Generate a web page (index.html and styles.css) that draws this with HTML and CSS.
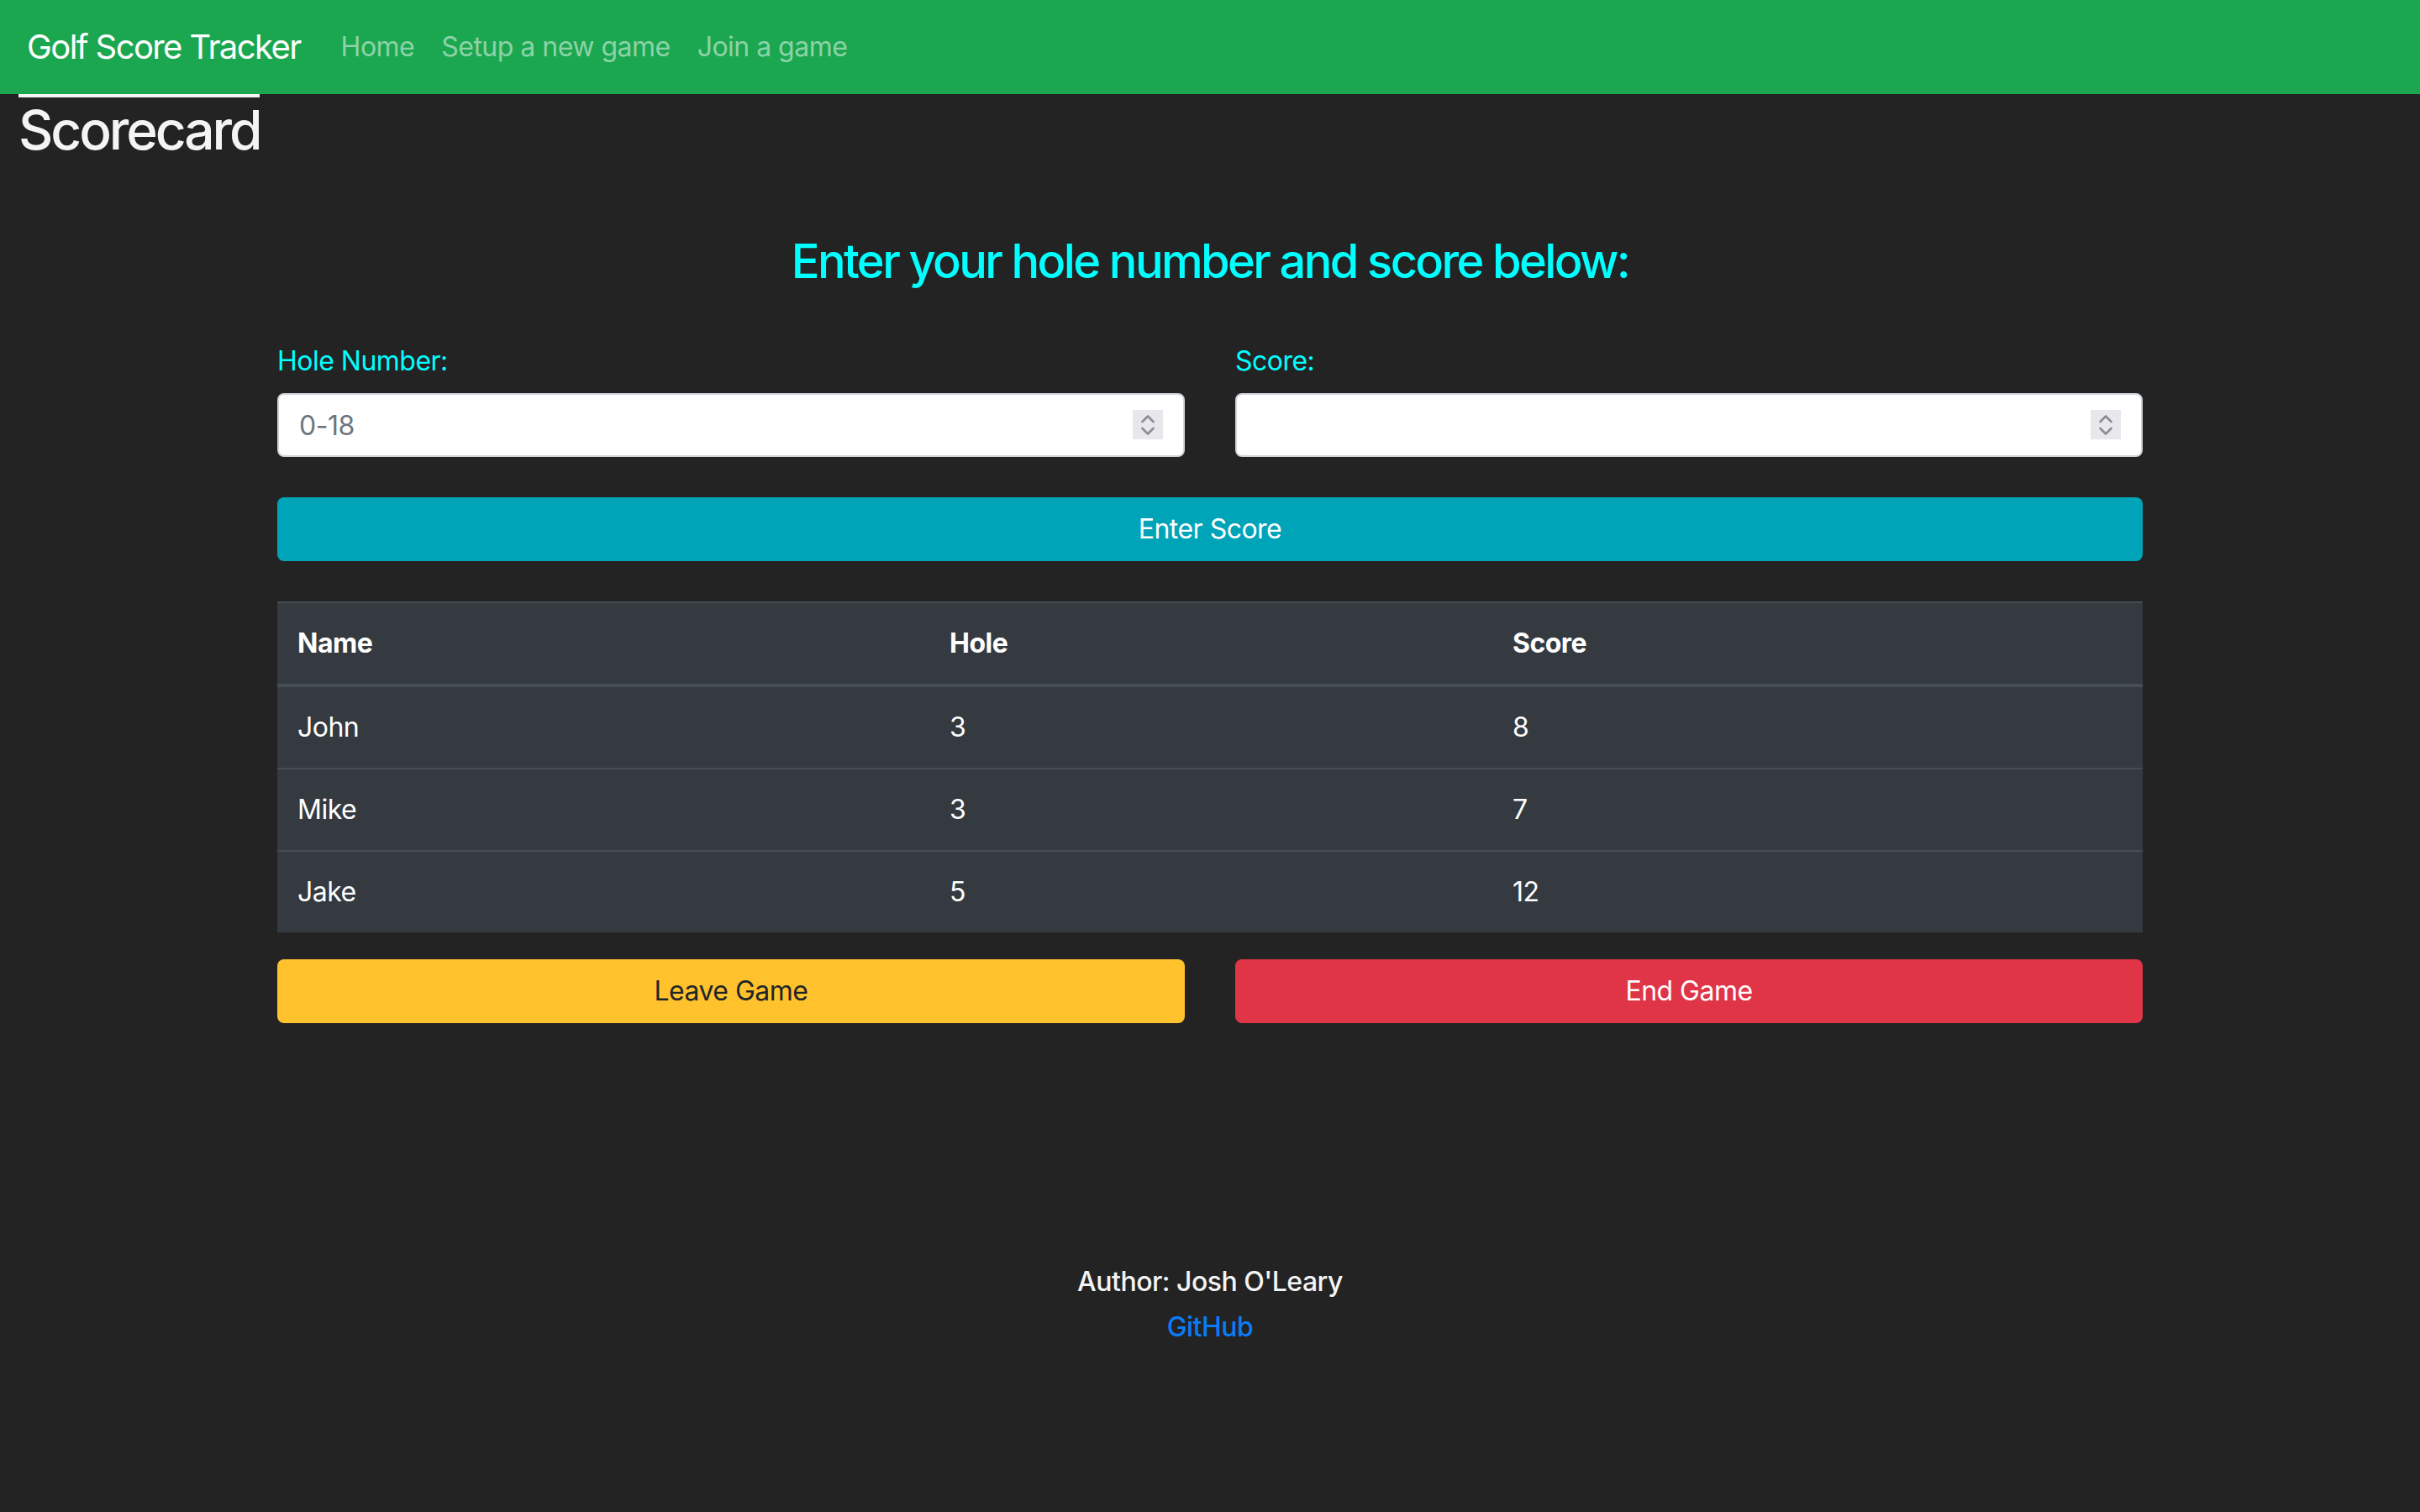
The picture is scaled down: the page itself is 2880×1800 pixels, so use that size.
FILE: index.html
```html
<!DOCTYPE html>
<html lang="en">
<head>
<meta charset="utf-8">
<title>Golf Score Tracker</title>
<link rel="stylesheet" href="styles.css">
</head>
<body>
<nav class="navbar">
  <a class="brand" href="#">Golf Score Tracker</a>
  <ul class="nav">
    <li><a class="nav-link" href="#">Home</a></li>
    <li><a class="nav-link" href="#">Setup a new game</a></li>
    <li><a class="nav-link" href="#">Join a game</a></li>
  </ul>
</nav>
<div class="title-bar">
  <h2 class="page-title">Scorecard</h2>
</div>
<main class="container">
  <h3 class="prompt">Enter your hole number and score below:</h3>
  <form class="score-form">
    <div class="row">
      <div class="field">
        <label class="label" for="hole">Hole Number:</label>
        <div class="input-wrap">
          <input class="input" id="hole" type="text" placeholder="0-18">
          <span class="spin"><svg width="36" height="35" viewBox="0 0 36 35"><path d="M11.5 14 L18 7.5 L24.5 14 M11.5 22 L18 28.5 L24.5 22" fill="none" stroke="#8e8d96" stroke-width="2.6" stroke-linecap="round" stroke-linejoin="round"/></svg></span>
        </div>
      </div>
      <div class="field">
        <label class="label" for="score">Score:</label>
        <div class="input-wrap">
          <input class="input" id="score" type="text">
          <span class="spin"><svg width="36" height="35" viewBox="0 0 36 35"><path d="M11.5 14 L18 7.5 L24.5 14 M11.5 22 L18 28.5 L24.5 22" fill="none" stroke="#8e8d96" stroke-width="2.6" stroke-linecap="round" stroke-linejoin="round"/></svg></span>
        </div>
      </div>
    </div>
    <button class="btn btn-info btn-block" type="button">Enter Score</button>
  </form>
  <table class="table">
    <thead>
      <tr><th class="col-name">Name</th><th class="col-hole">Hole</th><th class="col-score">Score</th></tr>
    </thead>
    <tbody>
      <tr><td>John</td><td>3</td><td>8</td></tr>
      <tr><td>Mike</td><td>3</td><td>7</td></tr>
      <tr><td>Jake</td><td>5</td><td>12</td></tr>
    </tbody>
  </table>
  <div class="row">
    <button class="btn btn-warning" type="button">Leave Game</button>
    <button class="btn btn-danger" type="button">End Game</button>
  </div>
</main>
<footer class="footer">
  <p class="author">Author: Josh O'Leary</p>
  <a class="gh" href="#">GitHub</a>
</footer>
</body>
</html>
```
FILE: styles.css
```css
* { box-sizing: border-box; }

html, body {
  margin: 0;
  padding: 0;
}

body {
  background: #232323;
  color: #ffffff;
  font-family: Inter, "Noto Sans", sans-serif;
  font-size: 32px;
  line-height: 48px;
  letter-spacing: -0.016em;
  min-height: 1800px;
}

.navbar {
  display: flex;
  align-items: center;
  height: 112px;
  padding: 16px 32px;
  background: #1aa74f;
}

.brand {
  color: #ffffff;
  text-decoration: none;
  font-size: 40px;
  line-height: 60px;
  letter-spacing: -0.04em;
  padding: 10px 0;
  margin-right: 32px;
}

.nav {
  display: flex;
  list-style: none;
  margin: 0;
  padding: 0;
}

.nav-link {
  display: block;
  padding: 0 16px;
  color: rgba(255, 255, 255, 0.5);
  text-decoration: none;
  line-height: 48px;
}

.title-bar {
  padding-left: 22px;
}

.page-title {
  display: inline-block;
  margin: 0;
  border-top: 4px solid #f4f4f4;
  font-size: 64px;
  line-height: 77px;
  font-weight: 500;
  letter-spacing: -0.048em;
  color: #f4f4f4;
}

.container {
  width: 2220px;
  margin: 0 auto;
}

.prompt {
  margin: 85px 0 0;
  text-align: center;
  color: #00ffff;
  font-size: 56px;
  line-height: 67px;
  font-weight: 500;
  letter-spacing: -0.047em;
}

.row {
  display: flex;
  gap: 60px;
}

.row > * {
  flex: 1 1 0;
}

.score-form .row {
  margin-top: 61px;
}

.label {
  display: block;
  color: #00ffff;
  margin-bottom: 14px;
}

.input-wrap {
  position: relative;
}

.input {
  display: block;
  width: 100%;
  height: 76px;
  padding: 12px 24px;
  border: 2px solid #ced4da;
  border-radius: 8px;
  background: #ffffff;
  font-family: inherit;
  font-size: 32px;
  letter-spacing: -0.016em;
  color: #495057;
  outline: none;
}

.input::placeholder {
  color: #6c757d;
}

.spin {
  position: absolute;
  right: 26px;
  top: 20px;
  width: 36px;
  height: 35px;
  background: #e8e7ec;
  display: block;
}

.spin svg {
  display: block;
}

.btn {
  display: block;
  height: 76px;
  border: 0;
  border-radius: 8px;
  font-family: inherit;
  font-size: 32px;
  line-height: 48px;
  letter-spacing: -0.016em;
  padding: 14px 24px;
  text-align: center;
  cursor: pointer;
}

.btn-block {
  width: 100%;
  margin-top: 48px;
}

.btn-info {
  background: #00a4b9;
  color: #ffffff;
}

.btn-warning {
  background: #ffc22d;
  color: #212529;
}

.btn-danger {
  background: #e03546;
  color: #ffffff;
}

.table {
  width: 100%;
  margin: 48px 0 32px;
  border-collapse: collapse;
  table-layout: fixed;
  background: #353a41;
  color: #ffffff;
}

.col-name { width: 776px; }
.col-hole { width: 670px; }
.col-score { width: 774px; }

.table th,
.table td {
  text-align: left;
  padding: 24px;
  border-top: 2px solid #454d55;
  line-height: 48px;
  vertical-align: top;
}

.table th {
  font-weight: 700;
  border-bottom: 4px solid #454d55;
}

.footer {
  margin-top: 281px;
  text-align: center;
  font-weight: 500;
  line-height: 54px;
}

.author {
  margin: 0;
  color: #f4f4f4;
}

.gh {
  color: #0a7cf6;
  text-decoration: none;
}
```
